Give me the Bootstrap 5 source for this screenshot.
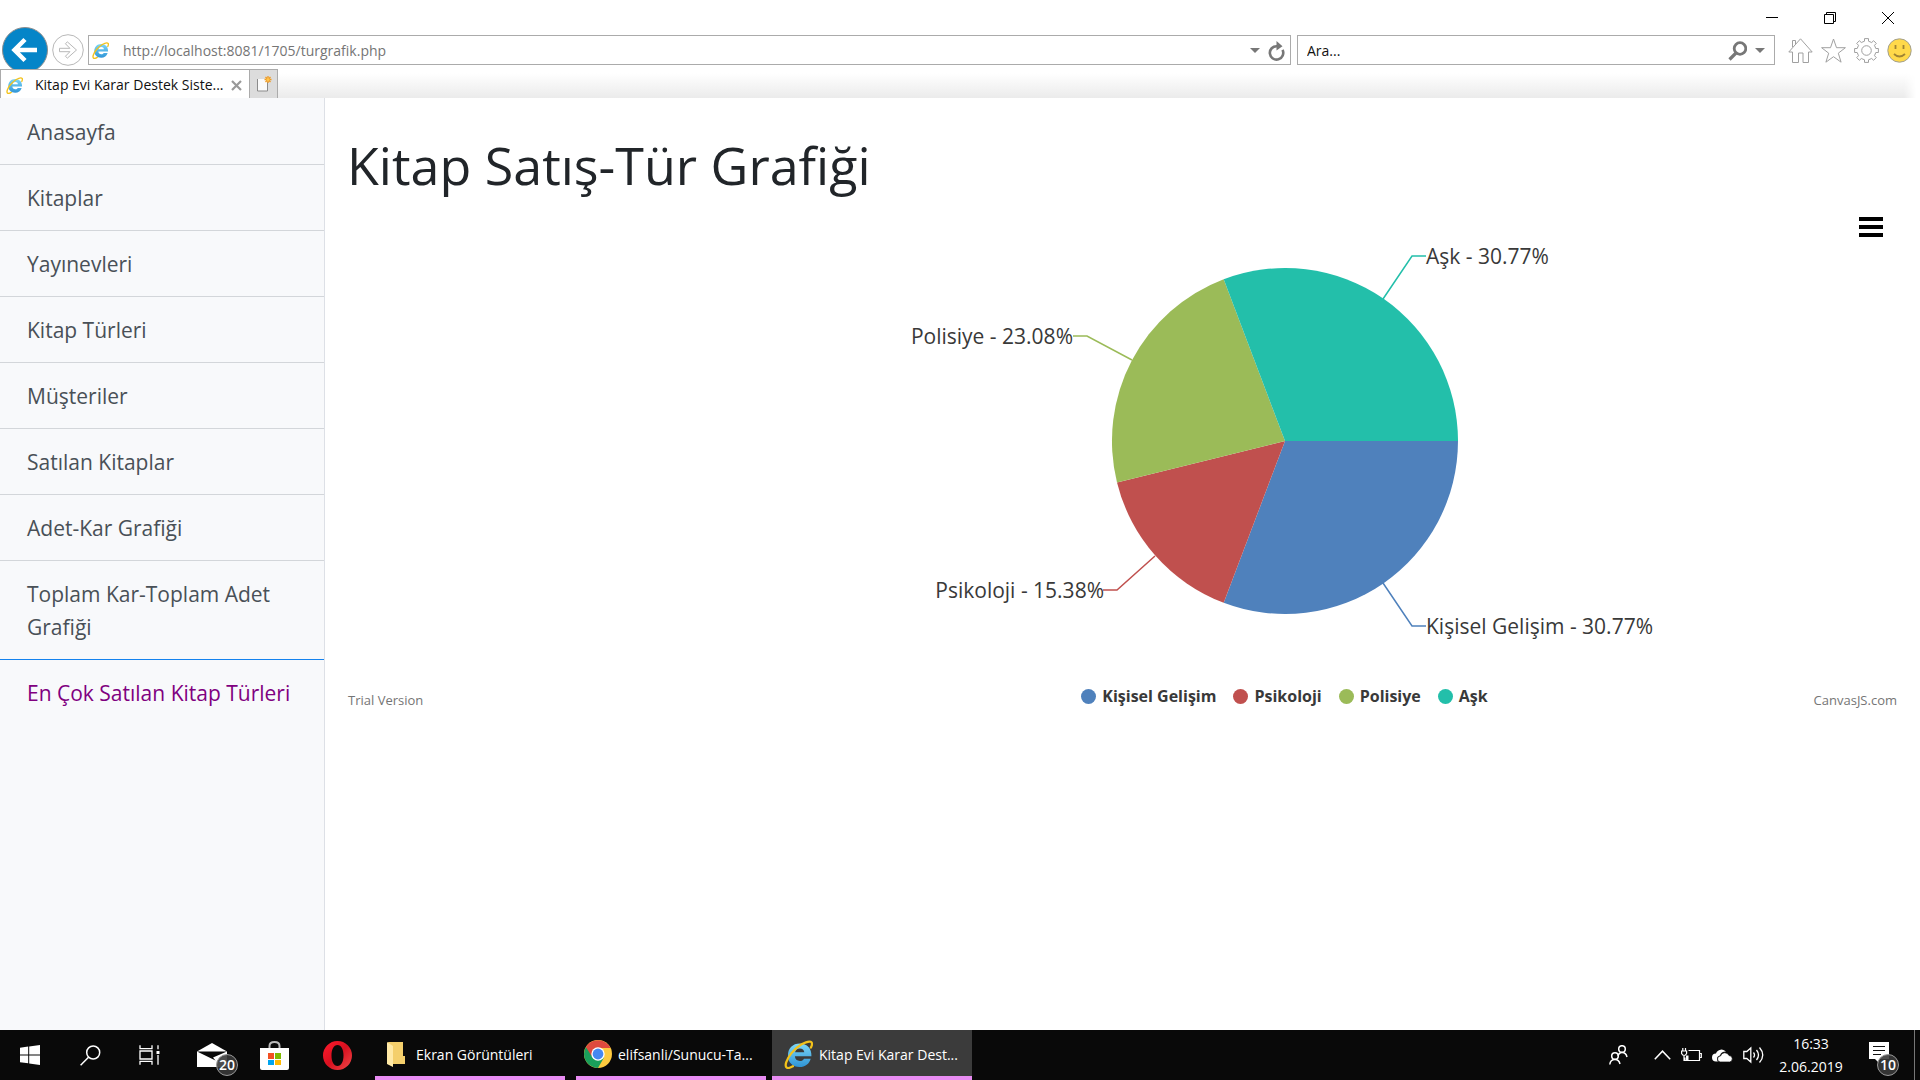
<!DOCTYPE html>
<html lang="tr">
<head>
<meta charset="utf-8">
<meta name="viewport" content="width=device-width, initial-scale=1">
<title>Kitap Evi Karar Destek Sistemi</title>
<link href="https://cdn.jsdelivr.net/npm/bootstrap@5.3.0/dist/css/bootstrap.min.css" rel="stylesheet">
<style>
  body { font-family: "Open Sans", "Noto Sans", sans-serif; font-size: 14px; line-height: 20px; color: #212529; overflow: hidden; }
  svg { display: block; flex-shrink: 0; }
  button { padding: 0; border: 0; background: none; color: inherit; }

  /* browser window */
  .caption-row { height: 35px; padding: 0 20px 0 0; gap: 34px; }
  .caption-row button { width: 24px; height: 35px; }
  .caption-row svg { margin: 0 auto; }
  .address-row { height: 30px; padding: 0 8px 0 2px; }
  .back-btn { width: 46px; height: 30px; margin-right: 4px; }
  .back-btn svg { margin-top: -8px; }
  .fwd-btn { width: 32px; margin-right: 4px; }
  .field-box { height: 30px; border: 1px solid #ababab; background: #fff; }
  .address-box { padding: 0 4px 0 3px; }
  .address-box svg, .search-box svg { margin-top: 1px; }
  .address-box input { color: #757575; font-size: 14px; margin-left: 14px; }
  .field-box input { border: 0; outline: 0; background: transparent; min-width: 0; padding: 2px 0 0; }
  .search-box { width: 478px; margin-left: 6px; padding: 0 9px; }
  .search-box input::placeholder { color: #111; opacity: 1; }
  .tool-icons { gap: 8px; margin-left: 13px; }
  .tab-row { height: 29px; margin-top: 4px; position: relative; z-index: 1; background: #fff; }
  .page-tab { width: 250px; border: 1px solid #ababab; border-bottom: 0; background: #fff; padding: 2px 7px 0 5px; color: #111; }
  .new-tab { width: 28px; border: 1px solid #ababab; border-left: 0; border-bottom: 0; background: #dcdcdc; }
  .tab-strip { background: linear-gradient(#fff 15%, #ebebeb); margin-right: 4px; -webkit-mask-image: linear-gradient(to left, transparent, #000 12px); mask-image: linear-gradient(to left, transparent, #000 12px); }

  /* page */
  .side-menu { width: 325px; background: #f8f9fb; border-right: 1px solid #dde0e6; padding-top: 1px; }
  .side-menu a { color: #495057; font-size: 21px; line-height: 33px; padding: 17px 32px 15px 27px; border-bottom: 1px solid #d3d6da; text-decoration: none; }
  .side-menu a.before-current { border-bottom-color: #1482ee; }
  .side-menu a.current { color: #800080; border-bottom: 0; }
  .content-pane { padding: 35px 23px 0 22px; }
  .content-pane h1 { font-size: 52px; line-height: 64px; font-weight: 400; margin: 0 0 4px; }
  .chart-menu { width: 24px; height: 20px; position: absolute; right: 14px; top: 16px; }
  .plot-area { margin-left: 325px; padding-top: 20px; }
  .plot-area text { font-size: 21px; fill: #393939; }
  .chart-foot { font-size: 13px; color: #757575; height: 30px; }
  .chart-foot a { color: inherit; text-decoration: none; }
  .foot-left { width: 409px; padding-left: 1px; }
  .foot-right { width: 84px; }
  .legend-list { gap: 17px; color: #393939; font-size: 16px; font-weight: 700; margin-bottom: 8px; }
  .legend-item { gap: 6px; }
  .legend-dot { width: 15px; height: 15px; border-radius: 50%; }

  /* task bar */
  .task-bar { height: 50px; background: #090909; color: #fff; }
  .task-bar .pin { width: 60px; height: 50px; display: flex; align-items: center; justify-content: center; position: relative; }
  .task-bar .pin-app { width: 63px; }
  .task-app { height: 50px; border-bottom: 4px solid #e88cf2 !important; display: flex; align-items: center; padding: 4px 0 0 12px !important; gap: 6px; white-space: nowrap; margin-right: 11px; }
  .task-app svg { margin-top: -2px; }
  .app-folder { width: 190px; margin-left: 6px; }
  .app-chrome { width: 190px; padding-left: 8px !important; margin-right: 6px; }
  .app-ie { width: 200px; background: #3b3b3b; }
  .count-disc { position: absolute; width: 22px; height: 22px; border-radius: 50%; border: 1px solid #999; background: #3a3a3ae6; font-size: 14px; line-height: 20px; text-align: center; font-weight: 600; }
  .mail-count { left: 36px; top: 24px; }
  .note-count { left: 16px; top: 24px; }
  .tray { gap: 10px; }
  .clock { width: 64px; text-align: center; line-height: 23px; margin-left: 5px; }
  .note-btn { width: 38px; height: 50px; position: relative; margin: 0 15px 0 18px; }
  .desktop-edge { width: 6px; height: 50px; border-left: 1px solid #777; }
</style>
</head>
<body>
<svg width="0" height="0" class="position-absolute" aria-hidden="true">
  <defs>
    <linearGradient id="ieBlue" x1="0" y1="0" x2="0" y2="1"><stop offset="0" stop-color="#7cd7f8"/><stop offset="1" stop-color="#2f94d6"/></linearGradient>
    <linearGradient id="operaRed" x1="0" y1="0" x2="1" y2="1"><stop offset="0" stop-color="#ff1b2d"/><stop offset=".5" stop-color="#d8101f"/><stop offset="1" stop-color="#f04a4a"/></linearGradient>
    <symbol id="ieLogo" viewBox="0 0 28 28">
      <path d="M26.500 15.800H10.500c.2 2.900 2 4.500 4.800 4.500 2 0 3.200-.8 4-2.200h6.500c-1.400 5-5.400 8-10.700 8C8.300 26.100 3.800 21.600 3.800 15 3.800 8 8.500 3.400 15.200 3.400c7.200 0 11.600 4.800 11.300 12.400zM10.700 11.900h8.900c-.2-2.400-1.800-3.800-4.300-3.800s-4.200 1.400-4.600 3.800z" fill="url(#ieBlue)"/>
      <path d="M26 7.300c1.500-3 1.400-5-.2-5.600C21.800.4 12.500 6 7.200 12.700 2.300 18.900.3 25 2.600 26.600c1.200.9 3.400.3 6-1.200" fill="none" stroke="#f3c21b" stroke-width="2.200" stroke-linecap="round"/>
    </symbol>
  </defs>
</svg>

<div class="d-flex flex-column vh-100 bg-white">
  <header class="flex-shrink-0">
    <div class="caption-row d-flex justify-content-end">
      <button aria-label="Simge durumuna küçült"><svg width="12" height="12" viewBox="0 0 12 12"><path d="M0 5.500h12" stroke="#000"/></svg></button>
      <button aria-label="Aşağı geri getir"><svg width="12" height="12" viewBox="0 0 12 12" fill="none" stroke="#000"><path d="M.5 2.500h9v9h-9zM2.500 2.500v-2h9v9h-2"/></svg></button>
      <button aria-label="Kapat"><svg width="12" height="12" viewBox="0 0 12 12"><path d="M0 0l12 12M12 0L0 12" stroke="#000"/></svg></button>
    </div>
    <div class="address-row d-flex align-items-center">
      <button class="back-btn" aria-label="Geri"><svg width="46" height="46" viewBox="0 0 46 46"><circle cx="23" cy="23" r="22.500" fill="#0585c8" stroke="#8d8d8d"/><path d="M35 23H13M23 12.500L12.500 23 23 33.500" fill="none" stroke="#fff" stroke-width="4.500"/></svg></button>
      <button class="fwd-btn" aria-label="İleri"><svg width="32" height="32" viewBox="0 0 32 32" fill="none" stroke="#b8b8b8"><circle cx="16" cy="16" r="15.300"/><path d="M7.500 14.300h10.400l-4.500-4.600 2-1.800L24.500 16l-9.100 8.100-2-1.800 4.500-4.600H7.500z"/></svg></button>
      <div class="field-box address-box flex-grow-1 d-flex align-items-center">
        <svg width="17" height="17"><use href="#ieLogo"/></svg>
        <input class="flex-grow-1" type="text" aria-label="Adres" value="http://localhost:8081/1705/turgrafik.php">
        <button aria-label="Adres listesi"><svg width="10" height="5" viewBox="0 0 10 5"><path d="M0 0h10L5 5z" fill="#777"/></svg></button>
        <button class="ms-2" aria-label="Yenile"><svg width="18" height="20" viewBox="0 0 18 20"><path d="M14.500 8.800A6.700 6.700 0 1 1 9 5.200" fill="none" stroke="#777" stroke-width="2.600"/><path d="M8.500 0l6 5.200-6 4.400z" fill="#777"/></svg></button>
      </div>
      <div class="field-box search-box d-flex align-items-center">
        <input class="flex-grow-1" type="text" aria-label="Ara" placeholder="Ara...">
        <button aria-label="Ara"><svg width="19" height="20" viewBox="0 0 19 20"><circle cx="12" cy="7.500" r="5.800" fill="none" stroke="#777" stroke-width="2.800"/><path d="M8 12l-6.500 6.500" stroke="#777" stroke-width="3.200"/></svg></button>
        <button class="ms-2" aria-label="Arama seçenekleri"><svg width="10" height="5" viewBox="0 0 10 5"><path d="M0 0h10L5 5z" fill="#777"/></svg></button>
      </div>
      <div class="tool-icons d-flex">
        <button aria-label="Giriş"><svg width="25" height="25" viewBox="0 0 25 25" fill="#fff" stroke="#a0a0a0"><path d="M4.500 14H.8L12.500.8 24.200 14h-3.700v10.500h-5.500v-9.500h-4.500v9.500h-6zM4.500 9V2.500h3V6"/></svg></button>
        <button aria-label="Sık kullanılanlar"><svg width="25" height="25" viewBox="0 0 25 25" fill="#fff" stroke="#a0a0a0"><path d="M12.500 1l3 8.700h8.900l-7.100 5.500 2.800 9-7.600-5.500-7.600 5.500 2.800-9L.6 9.700h8.900z"/></svg></button>
        <button aria-label="Araçlar"><svg width="25" height="25" viewBox="0 0 25 25" fill="#fff" stroke="#a0a0a0"><path d="M10.500.6h4v2.600l3.200 1.300 1.900-1.800 2.700 2.700-1.800 1.900 1.300 3.200h2.600v4h-2.600l-1.300 3.200 1.800 1.900-2.700 2.700-1.900-1.800-3.200 1.300v2.600h-4v-2.600l-3.200-1.300-1.900 1.800-2.700-2.700 1.800-1.900-1.300-3.200H.6v-4h2.600l1.300-3.200-1.800-1.900 2.700-2.700 1.900 1.800 3.200-1.300z"/><circle cx="12.500" cy="12.500" r="4.800"/></svg></button>
        <button aria-label="Geri bildirim"><svg width="25" height="25" viewBox="0 0 25 25"><circle cx="12.500" cy="12.500" r="11.700" fill="#ffd94a" stroke="#a3a08f"/><path d="M8.500 7v4M16.500 7v4" stroke="#a08433" stroke-width="1.800"/><path d="M7 16q5.500 5 11 0" fill="none" stroke="#a08433" stroke-width="1.800"/></svg></button>
      </div>
    </div>
    <div class="tab-row d-flex">
      <div class="page-tab d-flex align-items-center">
        <svg width="17" height="17"><use href="#ieLogo"/></svg>
        <span class="flex-grow-1 text-nowrap ms-2 ps-1">Kitap Evi Karar Destek Siste...</span>
        <button aria-label="Sekmeyi kapat"><svg width="11" height="11" viewBox="0 0 11 11"><path d="M1 1l9 9M10 1l-9 9" stroke="#999" stroke-width="2.200"/></svg></button>
      </div>
      <button class="new-tab" aria-label="Yeni sekme"><svg class="mx-auto" width="16" height="16" viewBox="0 0 16 16"><path d="M1.500 3h10v12h-10z" fill="#fafafa"/><path d="M1.500 3v12h10V6" fill="none" stroke="#8b8b8b"/><path d="M12 0v7M8.500 3.500h7M9.500 1l5 5M14.500 1l-5 5" stroke="#f09a20" stroke-width="1.300"/><circle cx="12" cy="3.500" r="1.600" fill="#ffc64d"/></svg></button>
      <div class="tab-strip flex-grow-1"></div>
    </div>
  </header>

  <div class="d-flex flex-grow-1 overflow-hidden">
    <nav class="side-menu d-flex flex-column flex-shrink-0" aria-label="Menü">
      <a href="#">Anasayfa</a>
      <a href="#">Kitaplar</a>
      <a href="#">Yayınevleri</a>
      <a href="#">Kitap Türleri</a>
      <a href="#">Müşteriler</a>
      <a href="#">Satılan Kitaplar</a>
      <a href="#">Adet-Kar Grafiği</a>
      <a href="#" class="before-current">Toplam Kar-Toplam Adet Grafiği</a>
      <a href="#" class="current" aria-current="page">En Çok Satılan Kitap Türleri</a>
    </nav>

    <main class="content-pane flex-grow-1">
      <h1>Kitap Satış-Tür Grafiği</h1>
      <section class="position-relative" aria-label="Pasta grafiği">
        <button class="chart-menu" aria-label="Grafik menüsü"><svg width="24" height="20" viewBox="0 0 24 20"><path d="M0 2h24M0 10h24M0 18h24" stroke="#000" stroke-width="4"/></svg></button>
        <div class="plot-area d-flex justify-content-center">
          <svg width="800" height="440" viewBox="0 0 800 440">
            <path d="M400 220H573A173 173 0 0 1 338.700 381.800Z" fill="#4f81bc"/>
            <path d="M400 220L338.700 381.800A173 173 0 0 1 232 261.400Z" fill="#c0504e"/>
            <path d="M400 220L232 261.400A173 173 0 0 1 338.700 58.200Z" fill="#9bbb58"/>
            <path d="M400 220L338.700 58.200A173 173 0 0 1 573 220Z" fill="#23bfaa"/>
            <g fill="none" stroke-width="1.500">
              <path d="M498 78l29-43h14" stroke="#23bfaa"/>
              <path d="M498 362l29 43h14" stroke="#4f81bc"/>
              <path d="M247 139l-45-24h-14" stroke="#9bbb58"/>
              <path d="M270 335l-38 34h-14" stroke="#c0504e"/>
            </g>
            <text x="541" y="43">Aşk - 30.77%</text>
            <text x="541" y="413">Kişisel Gelişim - 30.77%</text>
            <text x="188" y="123" text-anchor="end">Polisiye - 23.08%</text>
            <text x="219" y="377" text-anchor="end">Psikoloji - 15.38%</text>
          </svg>
        </div>
        <div class="chart-foot d-flex align-items-center mt-4">
          <span class="foot-left">Trial Version</span>
          <div class="legend-list flex-grow-1 d-flex justify-content-center">
            <div class="legend-item d-flex align-items-center"><span class="legend-dot" style="background:#4f81bc"></span>Kişisel Gelişim</div>
            <div class="legend-item d-flex align-items-center"><span class="legend-dot" style="background:#c0504e"></span>Psikoloji</div>
            <div class="legend-item d-flex align-items-center"><span class="legend-dot" style="background:#9bbb58"></span>Polisiye</div>
            <div class="legend-item d-flex align-items-center"><span class="legend-dot" style="background:#23bfaa"></span>Aşk</div>
          </div>
          <a class="foot-right text-end" href="#">CanvasJS.com</a>
        </div>
      </section>
    </main>
  </div>

  <footer class="task-bar d-flex align-items-center flex-shrink-0">
    <button class="pin" aria-label="Başlat"><svg width="20" height="20" viewBox="0 0 20 20" fill="#fff"><path d="M0 2.700l8.200-1.100v7.800H0zM9.200 1.400L20 0v9.400H9.200zM0 10.500h8.200v7.800L0 17.200zM9.200 10.500H20V20L9.200 18.500z"/></svg></button>
    <button class="pin" aria-label="Ara"><svg width="21" height="21" viewBox="0 0 21 21" fill="none" stroke="#fff" stroke-width="1.500"><circle cx="13.200" cy="7.500" r="6.500"/><path d="M8.500 12.200L.6 20.200"/></svg></button>
    <button class="pin" aria-label="Görev görünümü"><svg width="22" height="20" viewBox="0 0 22 20" fill="none" stroke="#fff" stroke-width="1.300"><path d="M1 .3v3.400h12V.3M1 19.700v-3.400h12v3.400M1 6h12v8H1zM19 .3v4M19 10v9.700"/><path d="M17.500 6h3v3h-3z" fill="#fff" stroke="none"/></svg></button>
    <button class="pin pin-app" aria-label="Posta"><svg width="30" height="24" viewBox="0 0 30 24"><path d="M0 8.500L15 0l15 8.500V24H0z" fill="#fff"/><path d="M0 8.500h30L16 14.500l2.500 3z" fill="#0a0a0a"/></svg><span class="count-disc mail-count">20</span></button>
    <button class="pin pin-app" aria-label="Mağaza"><svg width="29" height="29" viewBox="0 0 29 29"><path d="M9.500 8V5q0-4 5-4t5 4v3" fill="none" stroke="#b9b9b9" stroke-width="2"/><path d="M0 7h29v20q0 2-2 2H2q-2 0-2-2z" fill="#fff"/><path d="M8 12h6v6H8z" fill="#f25022"/><path d="M15 12h6v6h-6z" fill="#7fba00"/><path d="M8 19h6v5H8z" fill="#00a4ef"/><path d="M15 19h6v5h-6z" fill="#ffb900"/></svg></button>
    <button class="pin pin-app" aria-label="Opera"><svg width="29" height="29" viewBox="0 0 29 29"><path fill-rule="evenodd" d="M14.500 0a14.500 14.500 0 1 0 0 29 14.500 14.500 0 1 0 0-29zM14.500 4c3.800 0 6 4.500 6 10.500s-2.200 10.500-6 10.500-6-4.500-6-10.500S10.700 4 14.500 4z" fill="url(#operaRed)"/></svg></button>
    <button class="task-app app-folder"><svg class="me-1" width="19" height="27" viewBox="0 0 19 27"><path d="M1 1h15v14h2v8H6z" fill="#f4cf6c"/><path d="M0 1l6 4v21l-6-3z" fill="#ffe9a6"/></svg>Ekran Görüntüleri</button>
    <button class="task-app app-chrome"><svg width="28" height="28" viewBox="0 0 28 28"><circle cx="14" cy="14" r="14" fill="#fdca3f"/><path d="M14 14L1.900 7A14 14 0 0 0 14 28l6-10.500z" fill="#1a9f5b"/><path d="M1.900 7A14 14 0 0 1 26.500 8H14l-6.500 8z" fill="#de4a3e"/><circle cx="14" cy="14" r="6.700" fill="#fff"/><circle cx="14" cy="14" r="5.400" fill="#4688f1"/></svg>elifsanli/Sunucu-Ta...</button>
    <button class="task-app app-ie"><svg width="29" height="29"><use href="#ieLogo"/></svg>Kitap Evi Karar Dest...</button>
    <div class="tray d-flex align-items-center ms-auto">
      <button class="me-3" aria-label="Kişiler"><svg width="19" height="20" viewBox="0 0 19 20" fill="none" stroke="#fff" stroke-width="1.500"><circle cx="13" cy="4" r="3.300"/><path d="M9 11q1-3.500 4-3.500 4 0 5 4.500"/><circle cx="6" cy="11" r="3.300"/><path d="M.8 19.500q.5-5 5.200-5 4 0 5 4.500"/></svg></button>
      <button aria-label="Gizli simgeler"><svg width="17" height="10" viewBox="0 0 17 10"><path d="M.8 9.200l7.700-8 7.700 8" fill="none" stroke="#fff" stroke-width="1.500"/></svg></button>
      <svg width="21" height="14" viewBox="0 0 21 14" fill="none" stroke="#fff" stroke-width="1.200"><path d="M7.500 2.500h11v10H4v-3M19 5.500h1.300v4H19M1.800 0v3M4.500 0v3M.6 3h5v2.500q-1 2-2.500 2T.6 5.500zM3 7.500v5h2"/><path d="M5 7.500h2.500V12H5z" fill="#fff" stroke="none"/></svg>
      <svg width="21" height="13" viewBox="0 0 21 13"><path d="M4 12.500a4 4 0 0 1 0-8A6 6 0 0 1 14 2.500q-5 0-6 4-3 .5-3 3.500 0 1.500 1 2.500z" fill="#fff"/><path d="M8.500 13a3 3 0 0 1 0-6 4.500 4.500 0 0 1 8.500-.5 3.300 3.300 0 0 1 .8 6.500z" fill="#fff" stroke="#090909" stroke-width=".7"/></svg>
      <svg width="21" height="18" viewBox="0 0 21 18" fill="none" stroke="#fff" stroke-width="1.300"><path d="M.8 5.500h3l4-3.500v14l-4-3.500h-3zM10.500 6.500q2 2.500 0 5M13.500 4q4 5 0 10M16.500 1.500q6.500 7.500 0 15"/></svg>
      <div class="clock">16:33<br>2.06.2019</div>
    </div>
    <button class="note-btn" aria-label="Bildirimler"><svg width="21" height="22" viewBox="0 0 21 22" class="ms-2 mb-1"><path d="M0 0h20v17H10v4l-4-4H0z" fill="#fff"/><path d="M4 4.500h12M4 8.500h12M4 12.500h8" stroke="#111" stroke-width="1.200"/></svg><span class="count-disc note-count">10</span></button>
    <div class="desktop-edge"></div>
  </footer>
</div>
<script src="https://cdn.jsdelivr.net/npm/bootstrap@5.3.0/dist/js/bootstrap.bundle.min.js"></script>
</body>
</html>
